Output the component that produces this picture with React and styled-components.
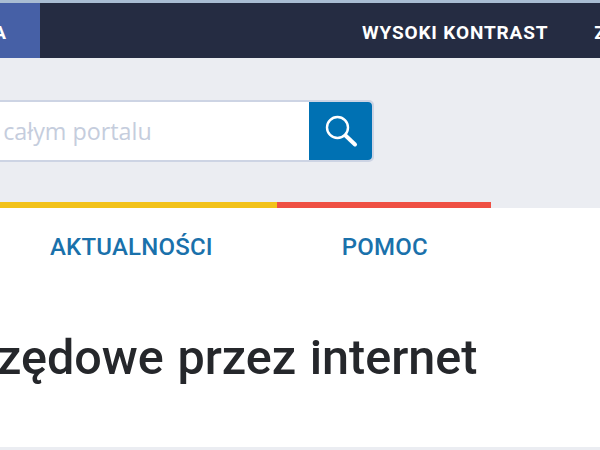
import styled, { createGlobalStyle } from 'styled-components'

const GlobalStyle = createGlobalStyle`
  html, body {
    margin: 0;
    background: #fff;
    overflow: hidden;
  }
`

const Page = styled.div`
  width: 600px;
  height: 450px;
  overflow: hidden;
  display: flex;
  flex-direction: column;
  font-family: Roboto, "Liberation Sans", sans-serif;
`

const TopBar = styled.div`
  height: 58px;
  box-sizing: border-box;
  flex: none;
  display: flex;
  align-items: center;
  background: #252c42;
  border-top: 3px solid #a9bdd3;
  overflow: hidden;
`

const BipLink = styled.div`
  width: 40px;
  height: 100%;
  flex: none;
  display: flex;
  align-items: center;
  justify-content: flex-end;
  padding: 4px 34px 0 0;
  box-sizing: border-box;
  overflow: hidden;
  background: #4660a6;
  color: #fff;
  font-size: 19px;
  font-weight: 700;
`

const TopLink = styled.a`
  flex: none;
  color: #fff;
  font-size: 19px;
  font-weight: 700;
  letter-spacing: 0.85px;
  white-space: nowrap;
  margin-left: ${p => p.$gap}px;
  margin-top: 4px;
`

const SearchBand = styled.div`
  height: 144px;
  flex: none;
  display: flex;
  align-items: center;
  padding-top: 2px;
  box-sizing: border-box;
  background: #ebedf2;
`

const SearchForm = styled.form`
  display: flex;
  height: 62px;
  width: 477px;
  margin-left: -103px;
  flex: none;
  border: 2px solid #cdd4e4;
  border-radius: 5px;
  box-sizing: border-box;
`

const SearchInput = styled.input`
  flex: 1;
  min-width: 0;
  border: 0;
  outline: 0;
  padding: 0;
  text-indent: 5px;
  background: #fff;
  font-family: "Open Sans", sans-serif;
  font-size: 23.3px;
  &::placeholder {
    color: #c5cddd;
    opacity: 1;
  }
`

const SearchButton = styled.button`
  width: 63px;
  flex: none;
  border: 0;
  padding: 0;
  display: flex;
  align-items: center;
  justify-content: center;
  background: #0071b3;
  border-radius: 0 4px 4px 0;
`

const Stripes = styled.div`
  height: 6px;
  flex: none;
  display: flex;
  background: #ebedf2;
`

const Stripe = styled.div`
  width: ${p => p.$width}px;
  background: ${p => p.$color};
`

const Nav = styled.nav`
  height: 78px;
  flex: none;
  display: flex;
  align-items: center;
  padding-left: 50px;
  gap: 129px;
`

const NavLink = styled.a`
  color: #1a71ab;
  font-size: 24px;
  font-weight: 500;
  letter-spacing: 0.2px;
  white-space: nowrap;
`

const Hero = styled.div`
  flex: 1;
  overflow: hidden;
  display: flex;
  justify-content: flex-end;
  padding: 42px 122.5px 0 0;
  border-bottom: 3px solid #ebedf2;
`

const Heading = styled.h1`
  margin: 0;
  color: #25272b;
  font-size: 48.5px;
  line-height: 60px;
  font-weight: 500;
  word-spacing: 1.5px;
  white-space: nowrap;
`

export default function App() {
  return (
    <Page>
      <GlobalStyle />
      <TopBar>
        <BipLink>A</BipLink>
        <TopLink $gap={322}>WYSOKI KONTRAST</TopLink>
        <TopLink $gap={46}>ZALOGUJ</TopLink>
      </TopBar>
      <SearchBand>
        <SearchForm onSubmit={e => e.preventDefault()}>
          <SearchInput type="text" placeholder="Szukaj w całym portalu" />
          <SearchButton type="submit" aria-label="Szukaj">
            <svg width="34" height="34" viewBox="0 0 34 34" fill="none" stroke="#fff" strokeLinecap="round">
              <circle cx="13.5" cy="13.5" r="10.5" strokeWidth="2.4" />
              <path d="M21.5 21.5 L31 30.5" strokeWidth="4" />
            </svg>
          </SearchButton>
        </SearchForm>
      </SearchBand>
      <Stripes>
        <Stripe $width={277} $color="#f2c21a" />
        <Stripe $width={214} $color="#ef4f43" />
      </Stripes>
      <Nav>
        <NavLink>AKTUALNOŚCI</NavLink>
        <NavLink>POMOC</NavLink>
      </Nav>
      <Hero>
        <Heading>Sprawy urzędowe przez internet</Heading>
      </Hero>
    </Page>
  )
}
